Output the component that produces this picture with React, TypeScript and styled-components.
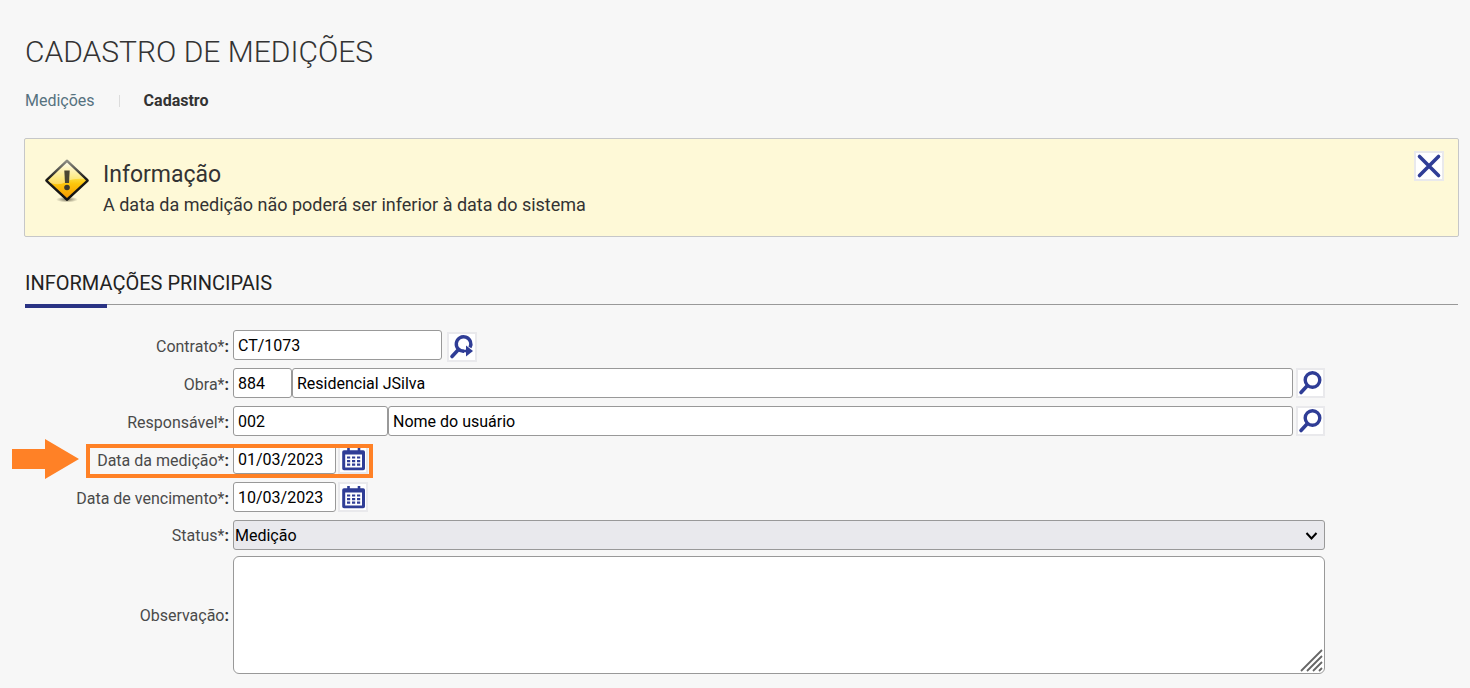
import React from "react";
import styled, { createGlobalStyle } from "styled-components";

const GlobalStyle = createGlobalStyle`
  *, *::before, *::after { box-sizing: border-box; }
  body {
    margin: 0;
    background: #f7f7f7;
    color: #333;
    font-family: Roboto, "Liberation Sans", sans-serif;
    font-size: 16px;
  }
  h1, h2, h3, p { margin: 0; }
`;

const Page = styled.main`
  padding: 32px 12px 14px 25px;
`;

const Title = styled.h1`
  font-size: 30px;
  line-height: 40px;
  font-weight: 300;
  text-transform: uppercase;
`;

const Breadcrumb = styled.nav`
  display: flex;
  align-items: center;
  margin-top: 19px;
  line-height: 20px;
`;

const Crumb = styled.a`
  color: #56727f;
  text-decoration: none;
`;

const CrumbDivider = styled.span`
  width: 1px;
  height: 12px;
  margin: 0 24px;
  background: #dcdcdc;
`;

const CurrentCrumb = styled.span`
  font-weight: 700;
`;

const Alert = styled.section`
  display: flex;
  align-items: flex-start;
  min-height: 99px;
  margin: 27px -1px 0;
  padding: 12px 14px 11px 17px;
  border: 1px solid #c6c7c9;
  border-radius: 2px;
  background: #fef9d7;
`;

const AlertText = styled.div`
  flex: 1;
  padding: 9px 0 0 13px;
`;

const AlertTitle = styled.h2`
  font-size: 23px;
  line-height: 30px;
  font-weight: 400;
`;

const AlertMessage = styled.p`
  font-size: 18px;
  line-height: 30px;
`;

const WarningIcon = styled.svg`
  margin-top: 7px;
  flex: none;
`;

const SectionTitle = styled.h2`
  position: relative;
  margin-top: 33px;
  padding-bottom: 7px;
  border-bottom: 1px solid #999;
  color: #222;
  font-size: 20px;
  line-height: 27px;
  font-weight: 400;
  text-transform: uppercase;

  &::after {
    content: "";
    position: absolute;
    left: 0;
    bottom: -4px;
    width: 82px;
    height: 4px;
    background: #2a3384;
  }
`;

const Form = styled.form`
  display: flex;
  flex-direction: column;
  gap: 6px;
  padding: 25px 133px 0 0;
`;

const Row = styled.div<{ $height?: number }>`
  position: relative;
  display: grid;
  grid-template-columns: 204px minmax(0, 1fr);
  column-gap: 4px;
  min-height: ${(p) => p.$height ?? 32}px;
`;

const Label = styled.label`
  align-self: center;
  padding-top: 2px;
  text-align: right;
  line-height: 20px;
  color: #4a4a4a;

  &::after {
    content: ":";
    font-weight: 700;
    color: #333;
  }
`;

const Controls = styled.div<{ $gap?: number }>`
  display: flex;
  align-items: flex-start;
  gap: ${(p) => p.$gap ?? 0}px;
`;

const TextInput = styled.input<{ $width?: number }>`
  ${(p) => (p.$width ? `flex: none; width: ${p.$width}px;` : "flex: 1; min-width: 0;")}
  height: 30px;
  padding: 0 4px;
  border: 1px solid #999;
  border-radius: 3px;
  background: #fff;
  color: #000;
  font: inherit;
`;

const IconButton = styled.button<{ $side?: number }>`
  flex: none;
  display: flex;
  align-items: center;
  justify-content: center;
  width: 30px;
  height: 30px;
  margin-left: ${(p) => p.$side ?? 0}px;
  padding: 0;
  border: 2px solid #e9e9ec;
  background: #fff;
  color: #2f3d96;
`;

const LookupButton = styled(IconButton)`
  width: 29px;
`;

const LowButton = styled(IconButton)`
  align-self: flex-end;
`;

const SelectBox = styled.div`
  position: relative;
  flex: 1;
`;

const Select = styled.select`
  display: block;
  width: 100%;
  height: 30px;
  padding: 0 24px 0 1px;
  appearance: none;
  border: 1px solid #999;
  border-radius: 3px;
  background: #e9e9ed;
  color: #000;
  font: inherit;
`;

const SelectArrow = styled.svg`
  position: absolute;
  top: 10px;
  right: 7px;
  pointer-events: none;
`;

const NotesBox = styled.div`
  position: relative;
  flex: 1;
`;

const Notes = styled.textarea`
  display: block;
  width: 100%;
  height: 118px;
  padding: 4px;
  resize: none;
  border: 1px solid #999;
  border-radius: 6px;
  background: #fff;
  font: inherit;
`;

const ResizeGrip = styled.svg`
  position: absolute;
  right: 2px;
  bottom: 2px;
  pointer-events: none;
`;

const Highlight = styled.div`
  position: absolute;
  top: 0;
  left: 61px;
  width: 287px;
  height: 34px;
  border: 4px solid #ff8126;
  pointer-events: none;
`;

const HighlightArrow = styled.svg`
  position: absolute;
  top: -5px;
  left: -13px;
`;

const SearchGlyph = () => (
  <svg width="25" height="26" viewBox="0 0 25 26" fill="none" stroke="currentColor" aria-hidden="true">
    <circle cx="14.5" cy="10" r="7.3" strokeWidth="3.4" />
    <path d="M9 16 3 22.500" strokeWidth="3.600" strokeLinecap="round" />
  </svg>
);

const SearchGoGlyph = () => (
  <svg width="26" height="26" viewBox="0 0 26 26" fill="none" stroke="currentColor" aria-hidden="true">
    <path d="M21 13.500A7.300 7.300 0 1 0 15 17.300" strokeWidth="3.400" />
    <path d="M9.500 15.500 3 22.500" strokeWidth="3.600" strokeLinecap="round" />
    <path d="M17 11.500v11l7-5.500z" fill="currentColor" stroke="none" />
    <path d="M13.500 17h4.500" strokeWidth="2.600" />
  </svg>
);

const CalendarGlyph = () => (
  <svg width="26" height="26" viewBox="0 0 26 26" fill="currentColor" aria-hidden="true">
    <path
      fillRule="evenodd"
      d="M4 4.200H7.200V2H9.800V4.200H17.700V2H20.300V4.200H23.200Q25 4.200 25 6V22.400Q25 24.200 23.200 24.200H4Q2.200 24.200 2.200 22.400V6Q2.200 4.200 4 4.200zM5.200 8.600V21.600H22V8.600z"
    />
    <path d="M7 10.400h3.200v2.200H7zM12 10.400h3.200v2.200H12zM17 10.400h3.200v2.200H17zM7 14h3.200v2.200H7zM12 14h3.200v2.200H12zM17 14h3.200v2.200H17zM7 17.600h3.200v2.200H7zM12 17.600h3.200v2.200H12zM17 17.600h3.200v2.200H17z" />
  </svg>
);

const CloseGlyph = () => (
  <svg width="26" height="26" viewBox="0 0 26 26" fill="none" stroke="currentColor" aria-hidden="true">
    <path d="M3.500 3.500 22.500 22.500M22.500 3.500 3.500 22.500" strokeWidth="3.600" strokeLinecap="round" />
  </svg>
);

const Warning = () => (
  <WarningIcon width="48" height="48" viewBox="0 0 48 48" aria-hidden="true">
    <defs>
      <linearGradient id="sign" x1="0" y1="0" x2="0" y2="1">
        <stop offset="0" stopColor="#fffbe0" />
        <stop offset="0.450" stopColor="#fbdc3c" />
        <stop offset="0.600" stopColor="#fcc60c" />
        <stop offset="1" stopColor="#f79a00" />
      </linearGradient>
      <linearGradient id="rim" x1="0" y1="0" x2="0" y2="1">
        <stop offset="0" stopColor="#8a8a80" />
        <stop offset="0.450" stopColor="#1c1c1a" />
        <stop offset="1" stopColor="#111" />
      </linearGradient>
      <radialGradient id="shade">
        <stop offset="0" stopColor="#55503c" stopOpacity="0.800" />
        <stop offset="1" stopColor="#55503c" stopOpacity="0" />
      </radialGradient>
    </defs>
    <ellipse cx="25" cy="41.500" rx="11" ry="3" fill="url(#shade)" />
    <path d="M25 3.500 45 22.500 25 41 5 22.500z" fill="url(#rim)" stroke="url(#rim)" strokeWidth="3.600" strokeLinejoin="round" />
    <path d="M25 4.500 44 22.500 25 40 6 22.500z" fill="url(#sign)" />
    <path d="M25 4.500 42.500 21Q31 20 24 24T8.500 25L6 22.500z" fill="#fff" opacity="0.350" />
    <path d="M22.300 12.500h5.400l-.7 12.500h-4z" fill="#4a4632" />
    <circle cx="25" cy="29.500" r="2.800" fill="#3e3b2c" />
  </WarningIcon>
);

interface LookupProps {
  id: string;
  label: string;
  code: string;
  name: string;
  codeWidth: number;
}

const LookupRow = ({ id, label, code, name, codeWidth }: LookupProps) => (
  <Row>
    <Label htmlFor={id}>{label}</Label>
    <Controls>
      <TextInput id={id} $width={codeWidth} defaultValue={code} />
      <TextInput aria-label={`${label} nome`} defaultValue={name} />
      <LookupButton type="button" $side={3} aria-label="Pesquisar">
        <SearchGlyph />
      </LookupButton>
    </Controls>
  </Row>
);

interface DateProps {
  id: string;
  label: string;
  value: string;
  highlighted?: boolean;
}

const DateRow = ({ id, label, value, highlighted }: DateProps) => (
  <Row>
    <Label htmlFor={id}>{label}</Label>
    <Controls $gap={2}>
      <TextInput id={id} $width={103} defaultValue={value} />
      <IconButton type="button" aria-label="Abrir calendário">
        <CalendarGlyph />
      </IconButton>
    </Controls>
    {highlighted && (
      <>
        <Highlight />
        <HighlightArrow width="67" height="40" viewBox="0 0 67 40" aria-hidden="true">
          <path d="M0 10h33V0l34 20-34 20V30H0z" fill="#ff8126" />
        </HighlightArrow>
      </>
    )}
  </Row>
);

export default function App() {
  return (
    <>
      <GlobalStyle />
      <Page>
        <Title>Cadastro de medições</Title>
        <Breadcrumb aria-label="Navegação">
          <Crumb href="#medicoes">Medições</Crumb>
          <CrumbDivider />
          <CurrentCrumb aria-current="page">Cadastro</CurrentCrumb>
        </Breadcrumb>

        <Alert>
          <Warning />
          <AlertText>
            <AlertTitle>Informação</AlertTitle>
            <AlertMessage>A data da medição não poderá ser inferior à data do sistema</AlertMessage>
          </AlertText>
          <IconButton type="button" aria-label="Fechar">
            <CloseGlyph />
          </IconButton>
        </Alert>

        <SectionTitle>Informações principais</SectionTitle>

        <Form>
          <Row>
            <Label htmlFor="contrato">Contrato*</Label>
            <Controls $gap={5}>
              <TextInput id="contrato" $width={209} defaultValue="CT/1073" />
              <LowButton type="button" aria-label="Pesquisar contrato">
                <SearchGoGlyph />
              </LowButton>
            </Controls>
          </Row>
          <LookupRow id="obra" label="Obra*" code="884" name="Residencial JSilva" codeWidth={59} />
          <LookupRow id="responsavel" label="Responsável*" code="002" name="Nome do usuário" codeWidth={155} />
          <DateRow id="medicao" label="Data da medição*" value="01/03/2023" highlighted />
          <DateRow id="vencimento" label="Data de vencimento*" value="10/03/2023" />
          <Row $height={30}>
            <Label htmlFor="status">Status*</Label>
            <Controls>
              <SelectBox>
                <Select id="status" defaultValue="medicao">
                  <option value="medicao">Medição</option>
                </Select>
                <SelectArrow width="13" height="12" viewBox="0 0 13 12" fill="none" aria-hidden="true">
                  <path d="M1.500 3 6.500 8.500 11.500 3" stroke="#000" strokeWidth="2" />
                </SelectArrow>
              </SelectBox>
            </Controls>
          </Row>
          <Row>
            <Label htmlFor="observacao">Observação</Label>
            <Controls>
              <NotesBox>
                <Notes id="observacao" />
                <ResizeGrip width="23" height="23" viewBox="0 0 23 23" stroke="#666" strokeWidth="1.800" aria-hidden="true">
                  <path d="M1 22 22 1M7 22 22 7M13 22 22 13M19 22l3-3" />
                </ResizeGrip>
              </NotesBox>
            </Controls>
          </Row>
        </Form>
      </Page>
    </>
  );
}
